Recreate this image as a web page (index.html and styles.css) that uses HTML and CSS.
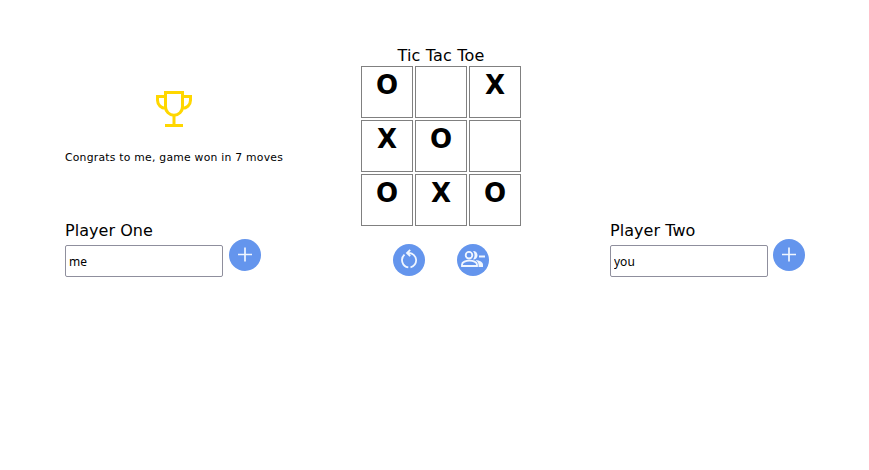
FILE: index.html
```
<!DOCTYPE html>
<html lang="en">
<head>
<meta charset="utf-8">
<title>Tic Tac Toe</title>
<link rel="stylesheet" href="styles.css">
</head>
<body>
<main class="game">
  <section class="player">
    <div class="result">
      <svg class="trophy" viewBox="0 0 36 36" fill="none" stroke="#ffd700" stroke-width="3"><path d="M9.500 1.500h17v14.200a8.500 8.500 0 0 1-17 0zM9.500 5.500h-8v3.800a8 8 0 0 0 8.400 8M26.500 5.500h8v3.800a8 8 0 0 1-8.400 8M18 24v10M9 34.500h18"/></svg>
      <p class="message">Congrats to me, game won in 7 moves</p>
    </div>
    <label class="name" for="one">Player One</label>
    <div class="entry"><input id="one" class="field" value="me"><button class="round add" aria-label="Add player one"><svg viewBox="0 0 32 32"><path d="M16 8.500v14M9 15.500h14"/></svg></button></div>
  </section>
  <section class="center">
    <h1 class="title">Tic Tac Toe</h1>
    <div class="board">
      <div class="cell">O</div><div class="cell"></div><div class="cell">X</div>
      <div class="cell">X</div><div class="cell">O</div><div class="cell"></div>
      <div class="cell">O</div><div class="cell">X</div><div class="cell">O</div>
    </div>
    <div class="actions">
      <button class="round" aria-label="Restart"><svg viewBox="0 0 32 32"><path d="M14 9h2.200a7.300 7.300 0 0 1 1.300 14.400M15.300 23.400A7.400 7.400 0 0 1 11.500 10.600M17.200 5.800l-3.200 3.200 3.200 3.200"/></svg></button>
      <button class="round" aria-label="Remove players"><svg viewBox="0 0 32 32"><circle cx="12" cy="11.200" r="3.300"/><path d="M5 22v-1.500c0-2.500 4-3.800 7.500-3.800s7.500 1.300 7.500 3.800V22zM22 12.500h6"/><path class="solid" d="M16 7c6 0 6 8.500 0 8.500 2-2.500 2-6 0-8.500zM18.500 16c4.500.5 7.500 2.200 7.500 4.700V23h-4.500c.3-3-.3-5-3-7z"/></svg></button>
    </div>
  </section>
  <section class="player two">
    <label class="name" for="two">Player Two</label>
    <div class="entry"><input id="two" class="field" value="you"><button class="round add" aria-label="Add player two"><svg viewBox="0 0 32 32"><path d="M16 8.500v14M9 15.500h14"/></svg></button></div>
  </section>
</main>
</body>
</html>
```
FILE: styles.css
```
* { box-sizing: border-box; }
body {
  margin: 0;
  background: #fff;
  color: #000;
  font: 16px/20px "DejaVu Sans", Verdana, sans-serif;
}
.game {
  display: grid;
  grid-template-columns: 296px 160px 285px;
  padding: 46px 0 0 65px;
}
.game > .two { margin-left: 89px; }
.player {
  display: flex;
  flex-direction: column;
  justify-content: flex-end;
  height: 231px;
}
.result {
  width: 218px;
  display: flex;
  flex-direction: column;
  align-items: center;
  margin-bottom: 55px;
}
.trophy { width: 36px; height: 36px; }
.message {
  margin: 23px 0 0;
  font-size: 10.8px;
  line-height: 16px;
  letter-spacing: 0.24px;
  white-space: nowrap;
}
.name { line-height: 20px; letter-spacing: 0.05px; }
.entry { display: flex; margin-top: 4px; }
.field {
  width: 158px;
  height: 32px;
  padding: 1px 3px;
  border: 1px solid #8f8f9d;
  border-radius: 2px;
  background: #fff;
  color: #000;
  font: 12px "Noto Sans", sans-serif;
}
.round {
  width: 32px;
  height: 32px;
  padding: 0;
  border: 0;
  border-radius: 50%;
  background: #6495ed;
}
.round svg {
  display: block;
  width: 32px;
  height: 32px;
  fill: none;
  stroke: #f0f6ff;
  stroke-width: 1.8;
}
.round .solid { fill: #f0f6ff; stroke: none; }
.add { margin: -6px 0 0 6px; }
.add svg { stroke-width: 1.7; }
.two .add { margin-left: 5px; }
.title {
  margin: 0;
  height: 20px;
  font-size: 16px;
  font-weight: 400;
  line-height: 20px;
  letter-spacing: 0.18px;
  text-align: center;
}
.board {
  display: grid;
  grid-template-columns: repeat(3, 52px);
  grid-auto-rows: 52px;
  gap: 2px;
}
.cell {
  border: 1px solid gray;
  font-size: 26px;
  font-weight: 700;
  line-height: 36px;
  text-align: center;
}
.actions {
  display: flex;
  justify-content: center;
  gap: 32px;
  margin-top: 18px;
}
```
